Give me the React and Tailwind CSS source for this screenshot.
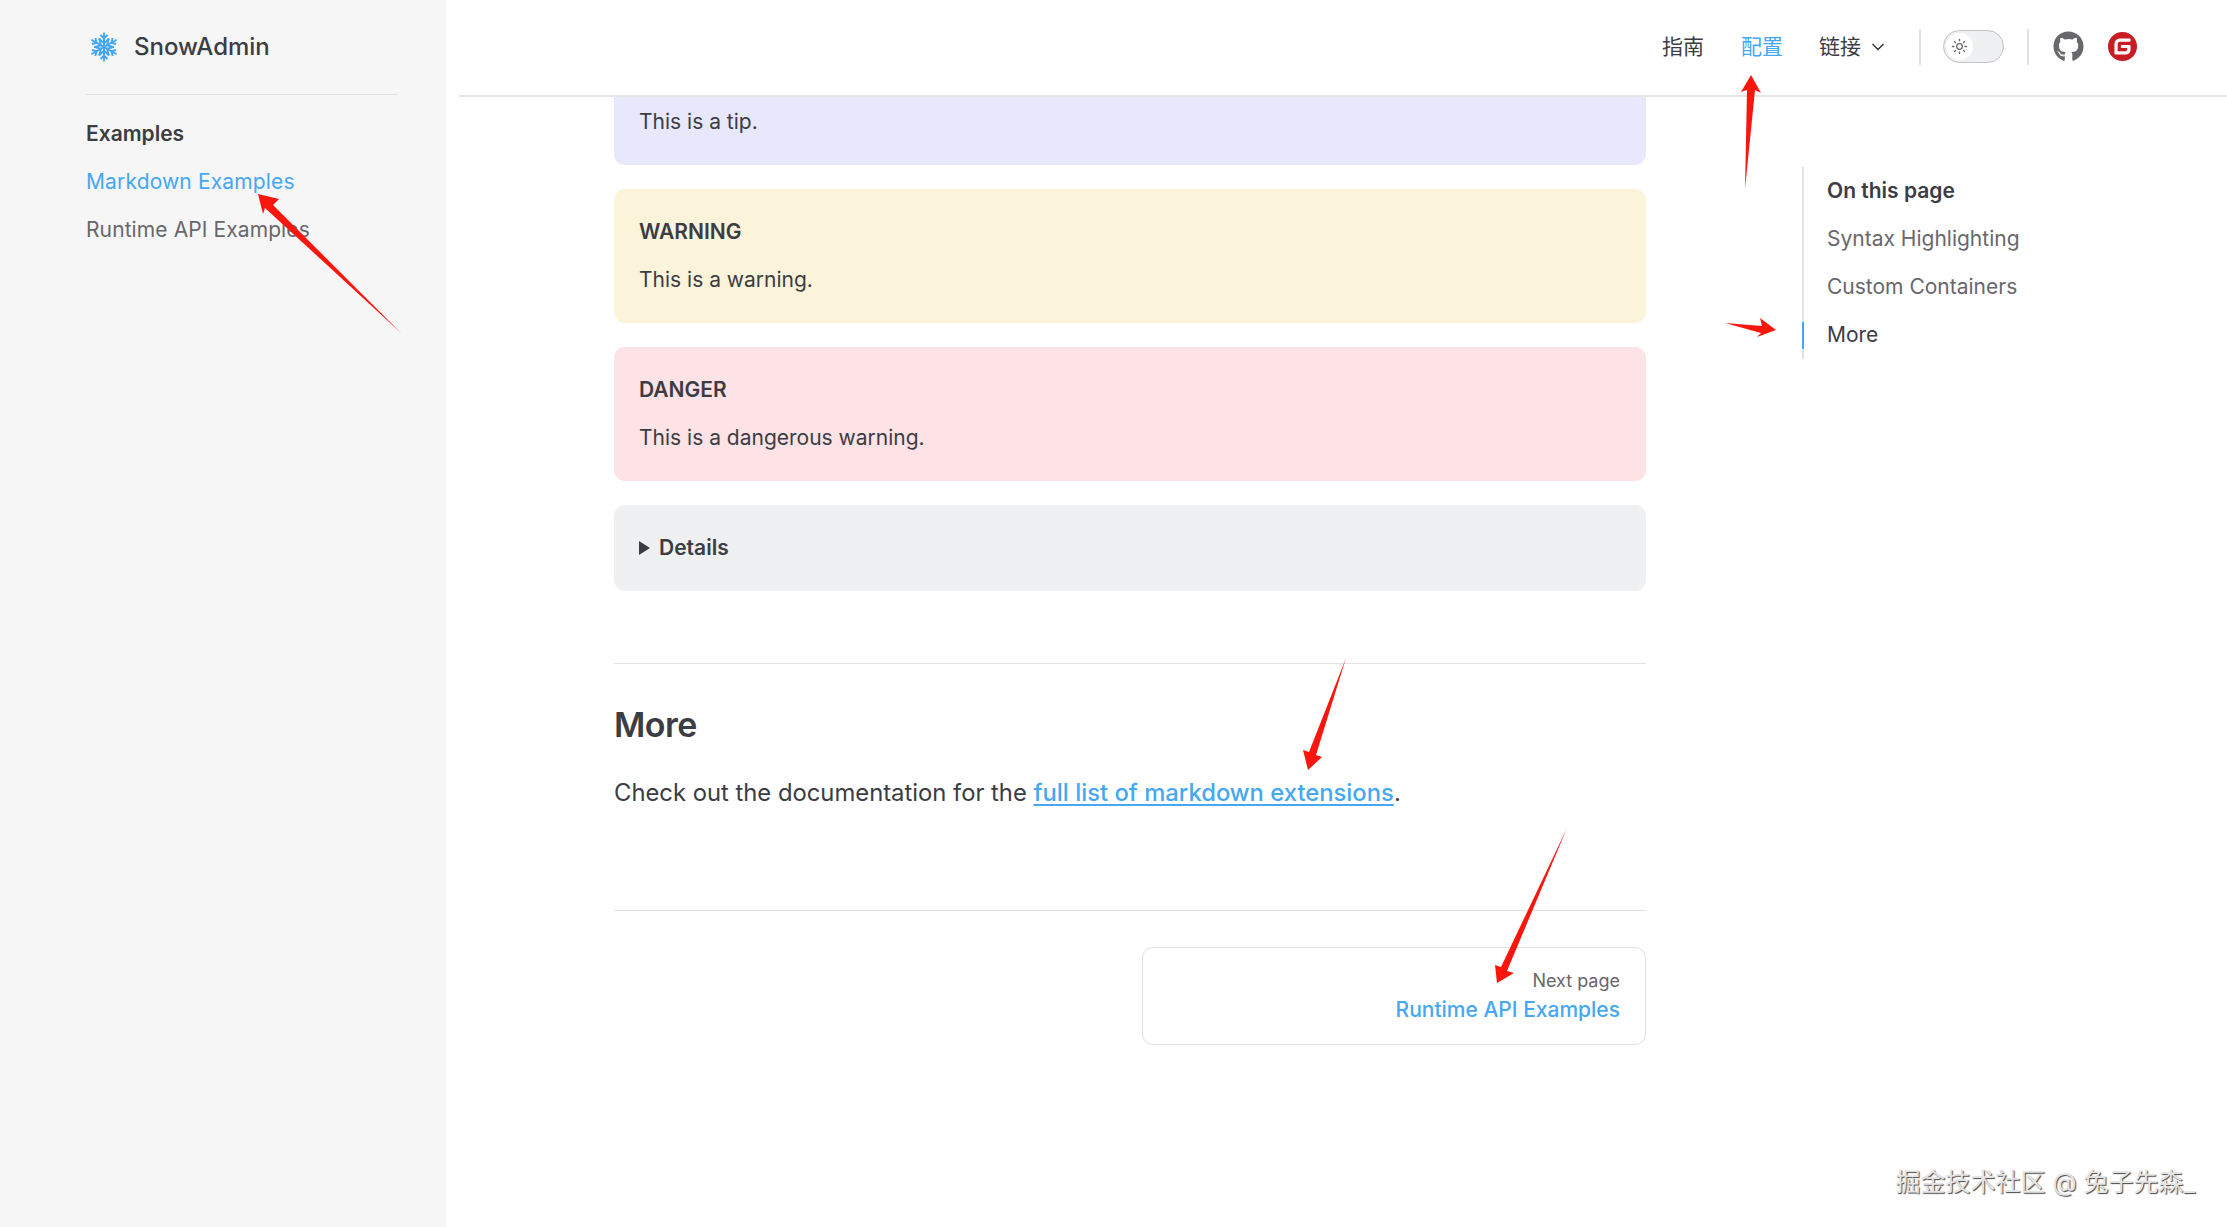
import { ChevronDown, Sun } from 'lucide-react'
import { FaGithub } from 'react-icons/fa'
import { SiGitee } from 'react-icons/si'

function SnowIcon() {
  return (
    <svg viewBox="0 0 60 60" className="ml-[3px] h-[32px] w-[30px] shrink-0" fill="none" stroke="#42a5f5" strokeWidth="3.8">
      {[0, 60, 120, 180, 240, 300].map((deg) => (
        <g key={deg} transform={`rotate(${deg} 30 30)`}>
          <path d="M30 30V1" />
          <path d="M23 6l7 7 7-7" />
          <path d="M20 13l10 10 10-10" />
        </g>
      ))}
    </svg>
  )
}

function Arrows() {
  return (
    <svg className="pointer-events-none absolute left-0 top-0 h-[1227px] w-[2227px]" viewBox="0 0 2227 1227" fill="#f9170d">
      <polygon points="258,194 279,199 273,205 401,333 265,208 263,214" />
      <polygon points="1751,75 1761,93 1755,90 1745,189 1747,90 1741,92" />
      <polygon points="1776,330 1760,318 1762,326 1725,323 1761,333 1757,337" />
      <polygon points="1308,770 1322,757 1316,755 1346,658 1309,752 1303,750" />
      <polygon points="1497,983 1514,973 1507,971 1567,828 1501,967 1495,965" />
    </svg>
  )
}

function Block({ title, bg, children }) {
  return (
    <div className={`rounded-[11px] px-[25px] pb-[26px] pt-[26px] text-[21px] leading-[34px] text-[#3c3c43] ${bg}`}>
      <p className="font-semibold">{title}</p>
      <p className="mt-[14px]">{children}</p>
    </div>
  )
}

export default function App() {
  return (
    <div className="relative flex h-screen w-full overflow-hidden bg-white font-['Inter','Noto_Sans_CJK_SC',sans-serif] text-[#3c3c43]">
      <aside className="w-[446px] shrink-0 bg-[#f6f6f7] pl-[86px] pr-[48px]">
        <div className="flex h-[95px] items-center gap-[15px] border-b border-[#e2e2e3]">
          <SnowIcon />
          <span className="text-[24px] font-medium">SnowAdmin</span>
        </div>
        <nav className="pt-[15px] text-[21px] leading-[48px]">
          <p className="font-semibold">Examples</p>
          <p className="tracking-[0.15px] text-[#46a7f2]">Markdown Examples</p>
          <p className="tracking-[0.1px] text-[#67676c]">Runtime API Examples</p>
        </nav>
      </aside>

      <main className="flex min-w-0 flex-1 flex-col">
        <header className="ml-[13px] flex h-[97px] shrink-0 items-center justify-end border-b-2 border-[#e6e6e8] pb-[2px] pr-[90px] text-[21px]">
          <span>指南</span>
          <span className="ml-[37px] text-[#46a7f2]">配置</span>
          <span className="ml-[36px]">链接</span>
          <ChevronDown className="ml-[7px] h-[20px] w-[20px]" strokeWidth={2} />
          <div className="ml-[31px] h-[36px] w-[2px] bg-[#e2e2e3]" />
          <div className="ml-[22px] flex h-[33px] w-[61px] items-center rounded-full border border-[#c2c2c4] bg-[#eff0f1] pl-[2px]">
            <div className="flex h-[27px] w-[27px] items-center justify-center rounded-full bg-white">
              <Sun className="h-[17px] w-[17px] text-[#67676c]" strokeWidth={1.8} />
            </div>
          </div>
          <div className="ml-[23px] h-[36px] w-[2px] bg-[#e2e2e3]" />
          <FaGithub className="ml-[24px] h-[31px] w-[31px] text-[#67676c]" />
          <SiGitee className="ml-[24px] h-[29px] w-[29px] text-[#c71d23]" />
        </header>

        <div className="flex min-h-0 flex-1">
          <section className="ml-[168px] w-[1032px] shrink-0">
            <div className="rounded-b-[11px] bg-[#e8e8fc] px-[25px] pb-[26px] pt-[8px] text-[21px] leading-[34px]">
              This is a tip.
            </div>
            <div className="mt-[24px] flex flex-col gap-[24px]">
              <Block title="WARNING" bg="bg-[#fbf3da]">This is a warning.</Block>
              <Block title="DANGER" bg="bg-[#fde2e6]">This is a dangerous warning.</Block>
              <div className="flex h-[86px] items-center rounded-[11px] bg-[#eef0f1] px-[25px] text-[21px] font-semibold">
                <span className="mr-[9px] h-0 w-0 border-y-[7px] border-l-[11px] border-y-transparent border-l-[#3c3c43]" />
                Details
              </div>
            </div>
            <div className="mt-[72px] border-t border-[#e2e2e3] pt-[38px]">
              <h2 className="text-[34px] font-semibold leading-[46px] tracking-[-0.5px]">More</h2>
              <p className="mt-[25px] text-[23.8px] leading-[40px]">
                Check out the documentation for the{' '}
                <a className="font-medium text-[#46a7f2] underline underline-offset-[3px]">full list of markdown extensions</a>.
              </p>
            </div>
            <div className="mt-[97px] border-t border-[#e2e2e3] pt-[36px]">
              <div className="ml-auto flex h-[98px] w-[504px] flex-col justify-center rounded-[11px] border border-[#e2e2e3] pr-[25px] text-right">
                <p className="text-[18px] leading-[28px] text-[#67676c]">Next page</p>
                <p className="text-[21px] font-medium leading-[30px] text-[#46a7f2]">Runtime API Examples</p>
              </div>
            </div>
          </section>

          <div className="ml-[156px] mt-[70px] h-[192px] w-[300px] shrink-0 border-l-2 border-[#e2e2e3] pl-[23px] text-[21px] leading-[48px]">
            <p className="font-semibold">On this page</p>
            <p className="text-[#67676c]">Syntax Highlighting</p>
            <p className="text-[#67676c]">Custom Containers</p>
            <p className="relative before:absolute before:-left-[25px] before:top-[11px] before:h-[27px] before:w-[2px] before:bg-[#46a7f2]">More</p>
          </div>
        </div>
      </main>

      <Arrows />
      <div className="absolute bottom-[28px] right-[32px] text-[25px] leading-[34px] text-[#e4e4e4] [text-shadow:1px_1px_1px_#444]">
        掘金技术社区 @ 兔子先森_
      </div>
    </div>
  )
}
